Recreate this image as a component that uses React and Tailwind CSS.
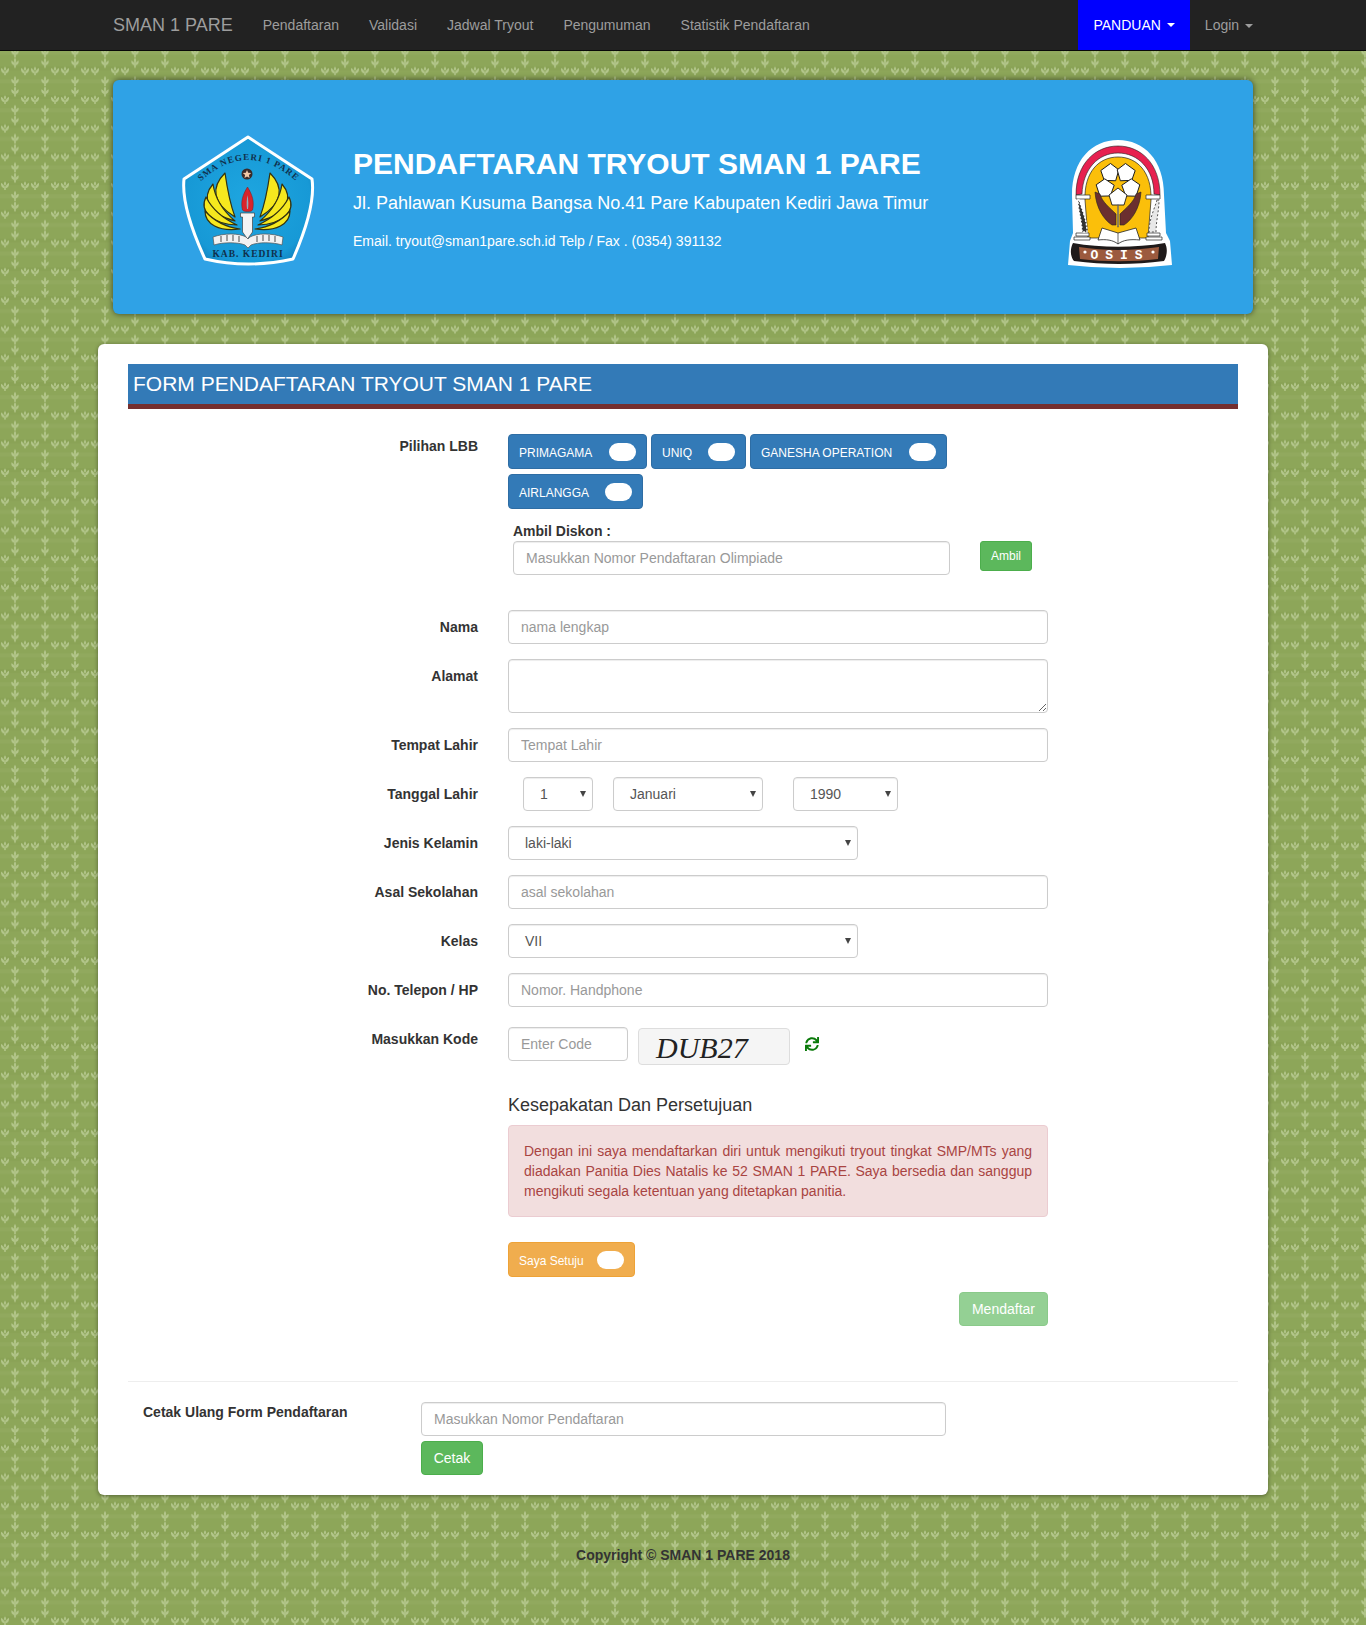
import { FaSync } from "react-icons/fa";

const navLinks = ["Pendaftaran", "Validasi", "Jadwal Tryout", "Pengumuman", "Statistik Pendaftaran"];

function Caret({ className = "ml-1.5" }) {
  return <span className={`inline-block align-middle border-t-4 border-x-4 border-x-transparent border-t-current ${className}`} />;
}

function Background() {
  return (
    <svg className="absolute inset-0 w-full h-full" aria-hidden="true">
      <defs>
        <filter id="soft" x="-10%" y="-10%" width="120%" height="120%">
          <feGaussianBlur stdDeviation="0.6" />
        </filter>
        {/* upright leaf */}
        <g id="sprig">
          <path d="M0-5C-1.500-3-1.500-1.500 0 0 1.500-1.500 1.500-3 0-5z" />
          <path d="M-.8-1H.8V5H-.8z" />
          <path d="M-3.600-2C-4.200.5-2.800 2.500-.3 2.800-.3.500-1.500-1.200-3.600-2zM3.600-2C4.200.5 2.800 2.500.3 2.800.3.500 1.500-1.200 3.600-2z" />
        </g>
        {/* small three-lobed crown */}
        <g id="crown">
          <path d="M0-4C-1.400-2.500-1.400-1 0 .5 1.400-1 1.400-2.500 0-4z" />
          <path d="M-4-2.500C-4.500.5-3 2.500-.5 3-.5.500-1.800-1.500-4-2.500zM4-2.500C4.500.5 3 2.500.5 3 .5.500 1.800-1.500 4-2.500z" />
          <path d="M-.8 1H.8V4.500H-.8z" />
        </g>
        <pattern id="leafs" width="30" height="28.7" patternUnits="userSpaceOnUse">
          <rect width="30" height="28.7" fill="#8da659" />
          <rect y="9" width="30" height="4" fill="#8aa356" />
          <rect y="22" width="30" height="4" fill="#91a95e" />
          <g fill="#b3c68b" filter="url(#soft)">
            <use href="#sprig" x="15" y="5.3" />
            <use href="#sprig" x="15" y="23.6" />
            <use href="#crown" x="5" y="13.2" />
            <use href="#crown" x="25" y="13.2" />
          </g>
        </pattern>
      </defs>
      <rect width="100%" height="100%" fill="url(#leafs)" />
    </svg>
  );
}

function KediriLogo() {
  const feathers = (
    <g fill="#f6e81e" stroke="#34320e" strokeWidth="1.2" strokeLinejoin="round">
      <path d="M44 38C30 52 31 68 54 82 48 66 46 52 44 38z" />
      <path d="M32 49C21 62 25 78 54 86 41 75 34 63 32 49z" />
      <path d="M25 62C18 76 31 89 56 90 41 83 31 74 25 62z" />
      <path d="M24 76C24 89 38 97 59 94 44 92 33 86 24 76z" />
    </g>
  );
  return (
    <svg width="136" height="134" viewBox="0 0 136 134">
      <defs>
        <radialGradient id="shield" cx="50%" cy="50%" r="62%">
          <stop offset="0%" stopColor="#1ea6e0" />
          <stop offset="78%" stopColor="#1799d6" />
          <stop offset="100%" stopColor="#0e78b6" />
        </radialGradient>
        <path id="arcText" d="M20 46Q67 4 115 46" />
      </defs>
      <path
        d="M67 2 131 44Q135 72 112 124 67 134 24 124 0 72 3 44Z"
        fill="url(#shield)"
        stroke="#fff"
        strokeWidth="3"
        strokeLinejoin="round"
      />
      <text fontFamily="Liberation Serif, serif" fontSize="9" fontWeight="700" fill="#10304c" letterSpacing="1">
        <textPath href="#arcText" startOffset="50%" textAnchor="middle">SMA NEGERI 1 PARE</textPath>
      </text>
      <circle cx="66" cy="39" r="5.5" fill="#3a2a2a" />
      <path d="m66 35 1.200 2.800 3 .2-2.300 2 .7 3-2.600-1.600-2.600 1.600.7-3-2.300-2 3-.2z" fill="#f0c8a8" />
      {feathers}
      <g transform="translate(133 0) scale(-1 1)">{feathers}</g>
      <path d="M66.500 52c5 8 7 15 5 23-1 2-9 2-10 0-2-8 0-15 5-23z" fill="#d8242c" stroke="#7a1a1a" strokeWidth=".5" />
      <path d="M66.500 60c1 5 1 10 .5 14h-1c-.5-4-.5-9 .5-14z" fill="#8fb0c0" />
      <path d="M59.500 78h14v4h-2v15l-5 7-5-7V82h-2z" fill="#f4f4f4" stroke="#444" strokeWidth=".7" />
      <path d="M33 110c9-3 24-3 31 0l3 3 3-3c7-3 22-3 31 0l1-8c-11-4-26-4-33 0l-2 2-2-2c-7-4-22-4-33 0z" fill="#f2f2f2" stroke="#555" strokeWidth=".7" />
      <g stroke="#666" strokeWidth="1.200">
        <path d="M40 101v6M46 100v6M52 100v6M58 101v6M76 101v6M82 100v6M88 100v6M94 101v6" />
      </g>
      <text x="67" y="122" textAnchor="middle" fontFamily="Liberation Serif, serif" fontSize="9.500" fontWeight="700" fill="#10304c" letterSpacing="1">KAB. KEDIRI</text>
    </svg>
  );
}

function OsisLogo() {
  const petal = "M0-4-9-11-6-21H6L9-11Z";
  return (
    <svg width="104" height="128" viewBox="0 0 104 128">
      <path d="M4 55C4 20 24 0 50 0s46 20 46 55l2 38 4 8 2 24q-52 6-104 0L2 101l3-8z" fill="#fff" />
      {/* red arch */}
      <path d="M8 55C8 24 27 6 50 6s42 18 42 49l-6-1C86 29 70 13 50 13S15 29 14 54z" fill="#e7204f" stroke="#222" strokeWidth=".6" />
      {/* yellow field */}
      <path d="M17 60C16 32 31 17 50 17s34 15 33 43l-3 38H20z" fill="#fbbf0a" stroke="#222" strokeWidth=".7" />
      {/* flower */}
      <g transform="translate(50 44)" fill="#fff" stroke="#1a1a1a" strokeWidth=".9" strokeLinejoin="round">
        <path d={petal} transform="rotate(-36)" />
        <path d={petal} transform="rotate(36)" />
        <path d={petal} transform="rotate(-108)" />
        <path d={petal} transform="rotate(108)" />
        <path d={petal} transform="rotate(180)" />
      </g>
      {/* hands */}
      <g fill="#6b2f2f" stroke="#222" strokeWidth=".6">
        <path d="M27 52 32 54C34 62 42 68 48 74V85H44C36 80 28 68 27 52z" />
        <path d="M73 52 68 54C66 62 58 68 52 74V85H56C64 80 72 68 73 52z" />
      </g>
      <path d="M49.500 65h1V87h-1z" fill="#fff" stroke="#222" strokeWidth=".5" />
      {/* book */}
      <path d="M50 93 34 88 30 100C38 99 45 100 50 104 55 100 62 99 72 100L68 88z" fill="#fff" stroke="#222" strokeWidth=".8" />
      <path d="M50 93v11" stroke="#222" strokeWidth=".7" />
      {/* pillars */}
      <g fill="#fff" stroke="#222" strokeWidth=".7">
        <path d="M8 55h14v4H8zM78 55h14v4H78z" />
        <path d="M6 97h16v3H6zM8 93h13v3H8zM78 97h16v3H78zM79 93h13v3H79z" />
      </g>
      <path d="M11 60c3 10 8 20 8 32h-5c0-11-4-21-4-32z" fill="#333" stroke="#fff" strokeWidth="1.400" strokeDasharray="2 1.500" />
      <path d="M89 60c-3 10-8 20-8 32h7c0-11 3-21 3-32z" fill="#e8e8e8" stroke="#555" strokeWidth="1" strokeDasharray="2 2" />
      {/* ribbon */}
      <path d="M5 103c28 5 62 5 92 0 3 6 2 13-1 18-30 4-60 4-90 0-4-5-4-12-1-18z" fill="#1f1a1a" />
      <path d="M11 107c26 4 52 4 80 0l-1 12c-26 3-52 3-78 0z" fill="#9c5a3e" />
      <text x="52" y="119" textAnchor="middle" fontFamily="Liberation Mono, monospace" fontSize="13" fontWeight="700" fill="#fff" letterSpacing="7">OSIS</text>
      <circle cx="17" cy="112" r="1.600" fill="#fff" />
      <circle cx="85" cy="112" r="1.600" fill="#fff" />
    </svg>
  );
}

function ToggleButton({ label, width, className = "bg-[#337ab7] border-[#2e6da4]" }) {
  return (
    <div className={`flex items-center justify-between h-[35px] pl-[10px] pr-[10px] border rounded text-white text-xs ${width} ${className}`}>
      <span className="pt-[2px]">{label}</span>
      <span className="w-[27px] h-[18px] bg-white rounded-full" />
    </div>
  );
}

function Input({ placeholder, className = "w-[540px]" }) {
  return (
    <input
      placeholder={placeholder}
      className={`h-[34px] px-3 bg-white border border-[#ccc] rounded text-sm text-[#555] placeholder:text-[#999] shadow-[inset_0_1px_1px_rgba(0,0,0,0.075)] ${className}`}
    />
  );
}

function Select({ value, className }) {
  return (
    <div className={`relative flex items-center h-[34px] pl-4 bg-white border border-[#ccc] rounded text-sm text-[#555] shadow-[inset_0_1px_1px_rgba(0,0,0,0.075)] ${className}`}>
      {value}
      <span className="absolute right-[6px] top-[13px] border-t-[6px] border-x-[3px] border-x-transparent border-t-[#444]" />
    </div>
  );
}

function Row({ label, children, className = "mb-[15px]", labelClass = "pt-[7px]" }) {
  return (
    <div className={`flex ${className}`}>
      <label className={`w-[380px] pr-[30px] text-right text-sm font-bold text-[#333] leading-5 ${labelClass}`}>{label}</label>
      <div className="flex-1">{children}</div>
    </div>
  );
}

export default function App() {
  return (
    <div className="relative min-h-[1625px] font-['Liberation_Sans',Arial,sans-serif] text-[#333] text-sm">
      <Background />
      <div className="relative">
        {/* NAVBAR */}
        <nav className="h-[51px] bg-[#222] border-b border-[#080808]">
          <div className="w-[1170px] mx-auto px-[15px] flex items-center h-[50px] text-[#9d9d9d]">
            <span className="text-lg mr-[15px]">SMAN 1 PARE</span>
            {navLinks.map((link) => (
              <span key={link} className="px-[15px]">{link}</span>
            ))}
            <div className="ml-auto flex items-center h-full whitespace-nowrap">
              <span className="flex items-center h-full px-[15px] bg-[#0000ff] text-white">PANDUAN <Caret /></span>
              <span className="pl-[15px]">Login <Caret className="ml-0.5" /></span>
            </div>
          </div>
        </nav>

        {/* BANNER */}
        <div className="w-[1140px] mx-auto mt-[29px] h-[234px] bg-[#2fa2e6] rounded-md shadow-[0_0_6px_rgba(0,0,0,0.6)] text-white flex items-center">
          <div className="ml-[68px] w-[172px] shrink-0 mt-[9px]"><KediriLogo /></div>
          <div className="flex-1 mt-[3px]">
            <h1 className="text-[30px] leading-9 font-bold">PENDAFTARAN TRYOUT SMAN 1 PARE</h1>
            <p className="text-lg mt-[8px] leading-[26px]">Jl. Pahlawan Kusuma Bangsa No.41 Pare Kabupaten Kediri Jawa Timur</p>
            <p className="text-sm mt-[15px] leading-5">Email. tryout@sman1pare.sch.id Telp / Fax . (0354) 391132</p>
          </div>
          <div className="mr-[81px] shrink-0 mt-[14px]"><OsisLogo /></div>
        </div>

        {/* FORM */}
        <div className="w-[1170px] h-[1151px] mx-auto mt-[30px] bg-white rounded-md shadow-[0_1px_4px_rgba(0,0,0,0.4)] px-[30px] pt-5">
          <div className="h-[45px] bg-[#337ab7] border-b-[5px] border-[#742f2f] text-white text-[21px] leading-10 pl-[5px]">
            FORM PENDAFTARAN TRYOUT SMAN 1 PARE
          </div>

          <div className="mt-[25px]">
            <div className="flex">
              <label className="w-[380px] pr-[30px] text-right text-sm font-bold leading-5 pt-[2px]">Pilihan LBB</label>
              <div className="flex-1">
                <div className="flex gap-1">
                  <ToggleButton label="PRIMAGAMA" width="w-[139px]" />
                  <ToggleButton label="UNIQ" width="w-[95px]" />
                  <ToggleButton label="GANESHA OPERATION" width="w-[197px]" />
                </div>
                <div className="mt-[5px]">
                  <ToggleButton label="AIRLANGGA" width="w-[135px]" />
                </div>
                <div className="ml-[5px] mt-[13px] font-bold leading-[19px]">Ambil Diskon :</div>
                <div className="flex items-start ml-[5px]">
                  <Input placeholder="Masukkan Nomor Pendaftaran Olimpiade" className="w-[437px]" />
                  <button className="ml-[30px] w-[52px] h-[30px] bg-[#5cb85c] border border-[#4cae4c] rounded-[3px] text-white text-xs">Ambil</button>
                </div>
              </div>
            </div>

            <div className="mt-[35px]">
              <Row label="Nama"><Input placeholder="nama lengkap" /></Row>
              <Row label="Alamat">
                <textarea className="block w-[540px] h-[54px] bg-white border border-[#ccc] rounded shadow-[inset_0_1px_1px_rgba(0,0,0,0.075)]" />
              </Row>
              <Row label="Tempat Lahir"><Input placeholder="Tempat Lahir" /></Row>
              <Row label="Tanggal Lahir">
                <div className="flex pl-[15px]">
                  <Select value="1" className="w-[70px]" />
                  <Select value="Januari" className="w-[150px] ml-[20px]" />
                  <Select value="1990" className="w-[105px] ml-[30px]" />
                </div>
              </Row>
              <Row label="Jenis Kelamin"><Select value="laki-laki" className="w-[350px]" /></Row>
              <Row label="Asal Sekolahan"><Input placeholder="asal sekolahan" /></Row>
              <Row label="Kelas"><Select value="VII" className="w-[350px]" /></Row>
              <Row label="No. Telepon / HP" className="mb-5"><Input placeholder="Nomor. Handphone" /></Row>
              <Row label="Masukkan Kode" labelClass="pt-[2px]">
                <div className="flex items-start">
                  <Input placeholder="Enter Code" className="w-[120px]" />
                  <div className="ml-[10px] mt-[1px] w-[152px] h-[37px] bg-[#f5f5f5] border border-[#ddd] rounded pl-[17px] font-['Liberation_Serif',serif] italic text-[30px] leading-[37px] text-[#222]">
                    DUB27
                  </div>
                  <FaSync className="ml-[15px] mt-[10px] text-[#0a7a0a]" size={14} />
                </div>
              </Row>
            </div>

            <div className="ml-[380px] w-[540px]">
              <h4 className="text-lg leading-5 mt-[30px]">Kesepakatan Dan Persetujuan</h4>
              <div className="mt-[10px] h-[92px] p-[15px] bg-[#f2dede] border border-[#ebccd1] rounded text-[#a94442] text-justify leading-5">
                Dengan ini saya mendaftarkan diri untuk mengikuti tryout tingkat SMP/MTs yang diadakan Panitia Dies Natalis ke 52 SMAN 1 PARE. Saya bersedia dan sanggup mengikuti segala ketentuan yang ditetapkan panitia.
              </div>
              <div className="mt-[25px]">
                <ToggleButton label="Saya Setuju" width="w-[127px]" className="bg-[#f0ad4e] border-[#eea236]" />
              </div>
              <div className="flex justify-end mt-[15px]">
                <button className="h-[34px] px-3 bg-[#5cb85c] border border-[#4cae4c] rounded text-white opacity-65">Mendaftar</button>
              </div>
            </div>

            <hr className="mt-[55px] border-[#eee]" />

            <div className="flex mt-5">
              <label className="w-[293px] pl-[15px] font-bold leading-5">Cetak Ulang Form Pendaftaran</label>
              <div>
                <Input placeholder="Masukkan Nomor Pendaftaran" className="block w-[525px]" />
                <button className="block mt-[5px] h-[34px] w-[62px] bg-[#5cb85c] border border-[#4cae4c] rounded text-white">Cetak</button>
              </div>
            </div>
          </div>
        </div>

        <p className="mt-[50px] text-center font-bold">Copyright © SMAN 1 PARE 2018</p>
      </div>
    </div>
  );
}
